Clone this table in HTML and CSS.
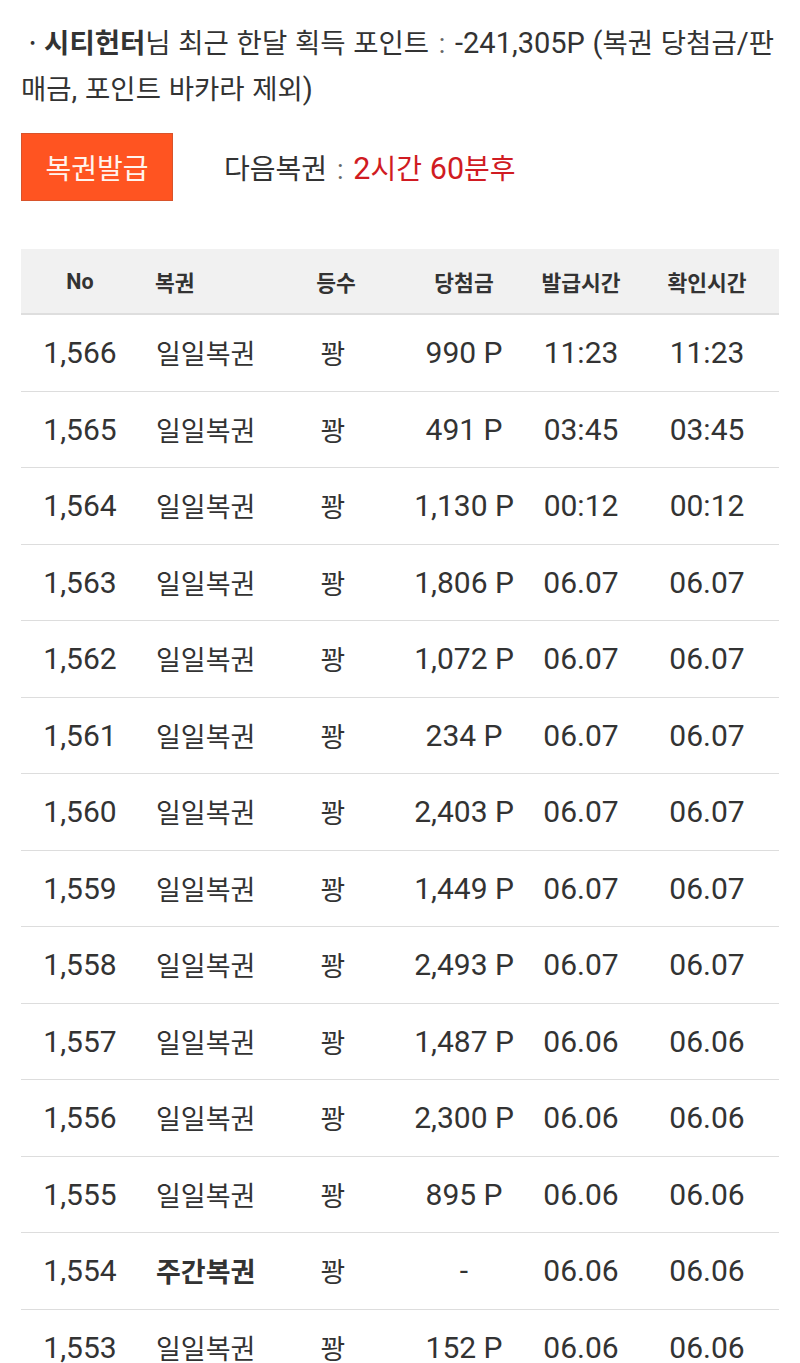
FILE: index.html
```html
<!DOCTYPE html>
<html lang="ko">
<head>
<meta charset="utf-8">
<link rel="stylesheet" href="styles.css">
</head>
<body>
<div class="page">
  <p class="summary">&nbsp;· <b>시티헌터</b>님 최근 한달 획득 포인트 <span class="colon">:</span> <span class="num">-241,305P</span> <span class="num">(</span>복권 당첨금<span class="num">/</span>판<br>매금<span class="num">,</span> 포인트 바카라 제외<span class="num">)</span></p>
  <div class="actions">
    <button class="issue">복권발급</button>
    <div class="next">다음복권 <span class="colon">:</span> <span class="red"><span class="num">2</span>시간 <span class="num">60</span>분후</span></div>
  </div>
  <table class="list">
    <colgroup>
      <col class="c1"><col class="c2"><col class="c3"><col class="c4"><col class="c5"><col class="c6">
    </colgroup>
    <thead>
      <tr><th class="no">No</th><th class="kind">복권</th><th class="rank">등수</th><th class="prize">당첨금</th><th class="t1">발급시간</th><th class="t2">확인시간</th></tr>
    </thead>
    <tbody>
      <tr><td class="no">1,566</td><td class="kind">일일복권</td><td class="rank">꽝</td><td class="prize">990 P</td><td class="t1">11:23</td><td class="t2">11:23</td></tr>
      <tr><td class="no">1,565</td><td class="kind">일일복권</td><td class="rank">꽝</td><td class="prize">491 P</td><td class="t1">03:45</td><td class="t2">03:45</td></tr>
      <tr><td class="no">1,564</td><td class="kind">일일복권</td><td class="rank">꽝</td><td class="prize">1,130 P</td><td class="t1">00:12</td><td class="t2">00:12</td></tr>
      <tr><td class="no">1,563</td><td class="kind">일일복권</td><td class="rank">꽝</td><td class="prize">1,806 P</td><td class="t1">06.07</td><td class="t2">06.07</td></tr>
      <tr><td class="no">1,562</td><td class="kind">일일복권</td><td class="rank">꽝</td><td class="prize">1,072 P</td><td class="t1">06.07</td><td class="t2">06.07</td></tr>
      <tr><td class="no">1,561</td><td class="kind">일일복권</td><td class="rank">꽝</td><td class="prize">234 P</td><td class="t1">06.07</td><td class="t2">06.07</td></tr>
      <tr><td class="no">1,560</td><td class="kind">일일복권</td><td class="rank">꽝</td><td class="prize">2,403 P</td><td class="t1">06.07</td><td class="t2">06.07</td></tr>
      <tr><td class="no">1,559</td><td class="kind">일일복권</td><td class="rank">꽝</td><td class="prize">1,449 P</td><td class="t1">06.07</td><td class="t2">06.07</td></tr>
      <tr><td class="no">1,558</td><td class="kind">일일복권</td><td class="rank">꽝</td><td class="prize">2,493 P</td><td class="t1">06.07</td><td class="t2">06.07</td></tr>
      <tr><td class="no">1,557</td><td class="kind">일일복권</td><td class="rank">꽝</td><td class="prize">1,487 P</td><td class="t1">06.06</td><td class="t2">06.06</td></tr>
      <tr><td class="no">1,556</td><td class="kind">일일복권</td><td class="rank">꽝</td><td class="prize">2,300 P</td><td class="t1">06.06</td><td class="t2">06.06</td></tr>
      <tr><td class="no">1,555</td><td class="kind">일일복권</td><td class="rank">꽝</td><td class="prize">895 P</td><td class="t1">06.06</td><td class="t2">06.06</td></tr>
      <tr><td class="no">1,554</td><td class="kind strong">주간복권</td><td class="rank">꽝</td><td class="prize">-</td><td class="t1">06.06</td><td class="t2">06.06</td></tr>
      <tr><td class="no">1,553</td><td class="kind">일일복권</td><td class="rank">꽝</td><td class="prize">152 P</td><td class="t1">06.06</td><td class="t2">06.06</td></tr>
    </tbody>
  </table>
</div>
</body>
</html>
```
FILE: styles.css
```css
html, body {
  margin: 0;
  padding: 0;
  background: #ffffff;
}
body {
  font-family: "Noto Sans CJK KR", "Roboto", sans-serif;
  color: #333333;
}
.page {
  padding: 20px 21px 0 21px;
}
.summary {
  margin: 0;
  font-size: 27.5px;
  line-height: 43px;
  color: #333333;
  white-space: nowrap;
}
.summary b {
  font-weight: 700;
}
.num {
  font-family: "Roboto", "Noto Sans CJK KR", sans-serif;
  font-size: 29px;
}
.colon {
  color: #666666;
  font-family: "Roboto", sans-serif;
  font-size: 27px;
  padding: 0 2px;
}
.actions {
  display: flex;
  align-items: center;
  gap: 51px;
  margin-top: 22px;
}
.issue {
  width: 152px;
  height: 68px;
  margin: 0;
  padding: 0;
  background: #ff5421;
  border: 1px solid #d8532b;
  color: #fff4ee;
  font-family: "Noto Sans CJK KR", sans-serif;
  font-size: 28px;
  line-height: 1;
}
.next {
  font-size: 28px;
  color: #333333;
}
.next .num {
  font-size: 30.5px;
}
.red {
  color: #d01b22;
}
.list {
  margin-top: 48px;
  width: 758px;
  border-collapse: collapse;
  table-layout: fixed;
}
.c1 { width: 118px; }
.c2 { width: 160px; }
.c3 { width: 100px; }
.c4 { width: 130px; }
.c5 { width: 126px; }
.c6 { width: 124px; }
.list thead th {
  height: 64px;
  padding: 0;
  background: #f1f1f1;
  border-bottom: 2px solid #dedede;
  font-family: "Roboto", "Noto Sans CJK KR", sans-serif;
  font-size: 21.5px;
  font-weight: 700;
  color: #333333;
  text-align: center;
}
.list tbody td {
  height: 75.5px;
  padding: 0;
  border-bottom: 1px solid #dddddd;
  text-align: center;
  color: #333333;
  font-family: "Roboto", "Noto Sans CJK KR", sans-serif;
  font-size: 30px;
}
.list .kind {
  text-align: left;
  padding-left: 17px;
  font-family: "Noto Sans CJK KR", sans-serif;
  font-size: 27px;
}
.list th.kind { font-size: 21.5px; padding-left: 16px; }
.list .rank {
  padding-right: 32px;
  font-family: "Noto Sans CJK KR", sans-serif;
  font-size: 27px;
}
.list th.rank { font-size: 21.5px; padding-right: 26px; }
.list .t1 { padding-right: 22px; }
.list .t2 { padding-right: 20px; }
.list .strong { font-weight: 700; }
```
